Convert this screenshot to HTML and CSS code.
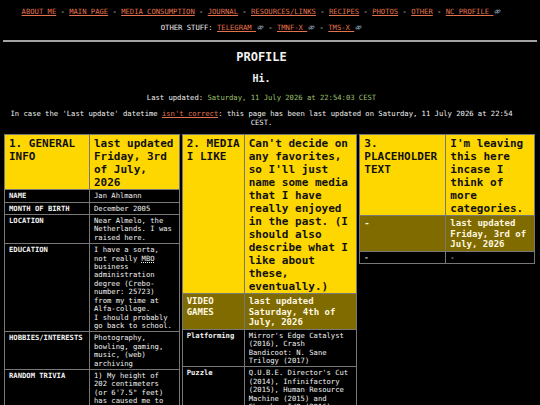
FILE: index.html
```html
<!DOCTYPE html>
<html>
<head>
  <title>Profile</title>
  <link rel="stylesheet" href="styles.css">
</head>
<body>

<div class="intro">
  <div class="site-nav">
    <div>
      <a href="#">ABOUT ME</a> - <a href="#">MAIN PAGE</a> - <a href="#">MEDIA CONSUMPTION</a> - <a href="#">JOURNAL</a> - <a href="#">RESOURCES/LINKS</a> - <a href="#">RECIPES</a> - <a href="#">PHOTOS</a> - <a href="#">OTHER</a> - <a href="#">NC PROFILE <svg class="ext" viewBox="0 0 10 10"><rect x="0.9" y="3.6" width="5.2" height="2.8" rx="1.4" transform="rotate(-45 3.5 5)"/><rect x="3.9" y="3.6" width="5.2" height="2.8" rx="1.4" transform="rotate(-45 6.5 5)"/></svg></a>
    </div>
    <div>
      OTHER STUFF: <a href="#">TELEGRAM <svg class="ext" viewBox="0 0 10 10"><rect x="0.9" y="3.6" width="5.2" height="2.8" rx="1.4" transform="rotate(-45 3.5 5)"/><rect x="3.9" y="3.6" width="5.2" height="2.8" rx="1.4" transform="rotate(-45 6.5 5)"/></svg></a> - <a href="#">TMNF-X <svg class="ext" viewBox="0 0 10 10"><rect x="0.9" y="3.6" width="5.2" height="2.8" rx="1.4" transform="rotate(-45 3.5 5)"/><rect x="3.9" y="3.6" width="5.2" height="2.8" rx="1.4" transform="rotate(-45 6.5 5)"/></svg></a> - <a href="#">TMS-X <svg class="ext" viewBox="0 0 10 10"><rect x="0.9" y="3.6" width="5.2" height="2.8" rx="1.4" transform="rotate(-45 3.5 5)"/><rect x="3.9" y="3.6" width="5.2" height="2.8" rx="1.4" transform="rotate(-45 6.5 5)"/></svg></a>
    </div>
  </div>
</div>

<hr class="rule">

<div class="intro">
  <h1>PROFILE</h1>
  <h2>Hi.</h2>
  <p class="updated">Last updated: <span class="date">Saturday, 11 July 2026 at 22:54:03 CEST</span></p>
  <p class="note">In case the 'Last update' datetime <a href="#">isn't correct</a>: this page has been last updated on Saturday, 11 July 2026 at 22:54 CEST.</p>
</div>

<div class="tables">
  <table>
    <colgroup><col class="key-general"><col></colgroup>
    <tr class="head">
      <th>1. GENERAL INFO</th>
      <th>last updated Friday, 3rd of July, 2026</th>
    </tr>
    <tr><th>NAME</th><td>Jan Ahlmann</td></tr>
    <tr><th>MONTH OF BIRTH</th><td>December 2005</td></tr>
    <tr><th>LOCATION</th><td>Near Almelo, the Netherlands. I was raised here.</td></tr>
    <tr>
      <th>EDUCATION</th>
      <td>I have a sorta, not really <abbr title="Middelbaar beroepsonderwijs">MBO</abbr> business administration degree (Crebo-number: 25723) from my time at Alfa-college.<br>I should probably go back to school.</td>
    </tr>
    <tr><th>HOBBIES/INTERESTS</th><td>Photography, bowling, gaming, music, (web) archiving</td></tr>
    <tr>
      <th>RANDOM TRIVIA</th>
      <td>1) My height of 202 centimeters (or 6'7.5" feet) has caused me to become a celebrity at every concert I go to.</td>
    </tr>
  </table>

  <table>
    <colgroup><col class="key-media"><col></colgroup>
    <tr class="head">
      <th>2. MEDIA I LIKE</th>
      <th>Can't decide on any favorites, so I'll just name some media that I have really enjoyed in the past. (I should also describe what I like about these, eventually.)</th>
    </tr>
    <tr class="sub">
      <th>VIDEO GAMES</th>
      <th>last updated Saturday, 4th of July, 2026</th>
    </tr>
    <tr><th>Platforming</th><td>Mirror's Edge Catalyst (2016), Crash Bandicoot: N. Sane Trilogy (2017)</td></tr>
    <tr><th>Puzzle</th><td>Q.U.B.E. Director's Cut (2014), Infinifactory (2015), Human Resource Machine (2015) and Shenzhen I/O (2016)</td></tr>
  </table>

  <table>
    <colgroup><col class="key-other"><col></colgroup>
    <tr class="head">
      <th>3. PLACEHOLDER TEXT</th>
      <th>I'm leaving this here incase I think of more categories.</th>
    </tr>
    <tr class="sub">
      <th>-</th>
      <th>last updated Friday, 3rd of July, 2026</th>
    </tr>
    <tr><th>-</th><td>-</td></tr>
  </table>
</div>

</body>
</html>
```

FILE: styles.css
```css
body {
  margin: 0;
  padding: 0 3px;
  background: #000;
  color: #f2f2f2;
  font-family: "DejaVu Sans Mono", "Liberation Mono", monospace;
  font-size: 7.2px;
  line-height: 8.4px;
}

a {
  color: #e2734e;
}

.intro {
  margin-right: 17px;
  text-align: center;
}

.site-nav {
  padding-top: 4px;
  line-height: 16px;
}

.ext {
  width: 7px;
  height: 7px;
  margin-left: 1px;
  vertical-align: -1px;
  fill: none;
  stroke: #9fb4cc;
  stroke-width: 1.1;
}

.rule {
  margin: 4px 0 0;
  height: 2px;
  border: none;
  background: #a3a3a3;
}

h1 {
  margin: 8px 0 0;
  font-size: 12px;
  line-height: 14px;
}

h2 {
  margin: 9px 0 0;
  font-size: 10px;
  line-height: 12px;
}

.updated {
  margin: 9px 0 0;
}

.date {
  color: #9fc06e;
}

.note {
  margin: 8px 0 0;
}

abbr {
  text-decoration: underline dotted;
}

.tables {
  display: grid;
  grid-template-columns: repeat(3, 1fr);
  align-items: start;
  gap: 2px;
  margin: 7px 2px 0 1px;
}

table {
  width: 100%;
  border-collapse: collapse;
}

.key-general { width: 85px; }
.key-media { width: 62px; }
.key-other { width: 86px; }

th, td {
  border: 1px solid #777;
  padding: 2px 4px 1px;
  vertical-align: top;
  text-align: left;
}

td {
  color: #f2f2f2;
}

.head th {
  background: #ffd700;
  color: #111;
  font-size: 11px;
  line-height: 13px;
  padding-bottom: 0;
}

.sub th {
  background: #7f6b00;
  color: #fff8e0;
  font-size: 9px;
  line-height: 10.5px;
}
```
